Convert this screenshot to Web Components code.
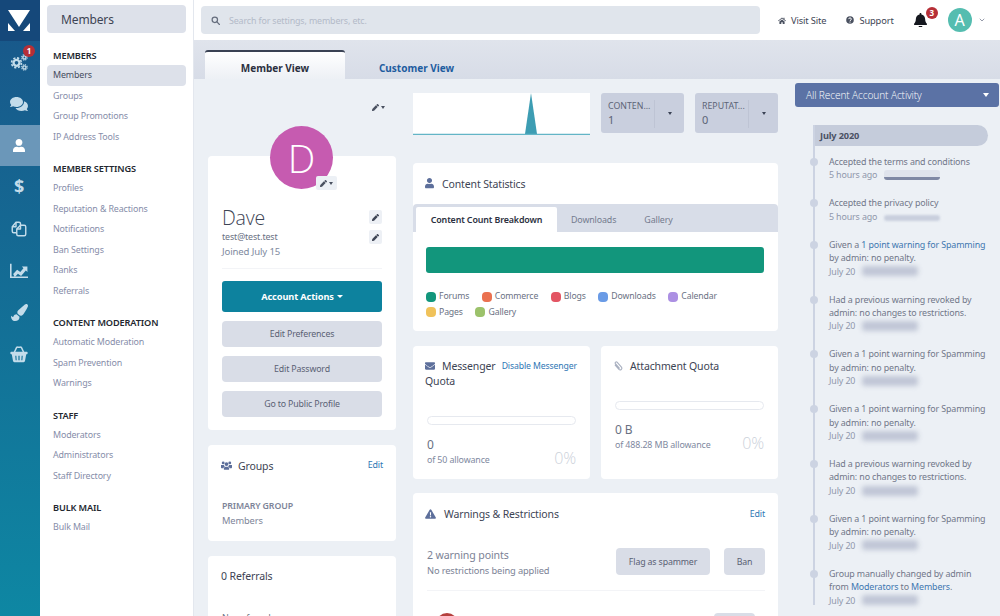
<!DOCTYPE html>
<html lang="en">
<head>
<meta charset="utf-8">
<title>Members</title>
<style>
  html, body { margin: 0; height: 616px; overflow: hidden; background: #ecf0f5; }
  body { font-family: "Noto Sans", "Open Sans", sans-serif; color: #3d4454; letter-spacing: -0.13px; }
</style>
</head>
<body>
<acp-app>
  <acp-rail slot="rail"></acp-rail>
  <acp-nav slot="nav"></acp-nav>
  <acp-header slot="header"></acp-header>
  <acp-tabs slot="tabs"></acp-tabs>
  <profile-column slot="left"></profile-column>
  <stats-column slot="middle"></stats-column>
  <activity-column slot="right"></activity-column>
</acp-app>

<script>
// icons shared by the shadow roots
const ICONS = {
  user: '<svg viewBox="0 0 448 512"><path fill="currentColor" d="M224 256c70.7 0 128-57.3 128-128S294.7 0 224 0 96 57.3 96 128s57.3 128 128 128zm89.6 32h-16.7c-22.2 10.2-46.9 16-72.9 16s-50.6-5.8-72.9-16h-16.7C60.2 288 0 348.2 0 422.4V464c0 26.5 21.5 48 48 48h352c26.5 0 48-21.5 48-48v-41.6c0-74.2-60.2-134.4-134.4-134.4z"/></svg>',
  comments: '<svg viewBox="0 0 576 512"><path fill="currentColor" d="M416 192c0-88.4-93.1-160-208-160S0 103.6 0 192c0 34.3 14.1 65.9 38 92-13.4 30.2-35.5 54.2-35.8 54.5-2.2 2.3-2.8 5.7-1.5 8.7S4.8 352 8 352c36.6 0 66.9-12.3 88.7-25 32.2 15.7 70.3 25 111.3 25 114.9 0 208-71.6 208-160zm122 220c23.9-26 38-57.7 38-92 0-66.9-53.5-124.2-129.3-148.1.9 6.6 1.3 13.3 1.3 20.1 0 105.9-107.7 192-240 192-10.8 0-21.3-.8-31.7-1.9C207.8 439.6 281.8 480 368 480c41 0 79.1-9.2 111.3-25 21.8 12.7 52.1 25 88.7 25 3.2 0 6.1-1.9 7.3-4.8 1.3-2.9.7-6.3-1.5-8.7-.3-.3-22.4-24.2-35.8-54.5z"/></svg>',
  brush: '<svg viewBox="0 0 512 512"><path fill="currentColor" d="M167.02 309.34c-40.12 2.58-76.53 17.86-97.19 72.3-2.35 6.21-8 9.98-14.59 9.98-11.11 0-45.46-27.67-55.25-34.35C0 439.62 37.93 512 128 512c75.86 0 128-43.77 128-120.19 0-3.11-.65-6.08-.97-9.13l-88.01-73.34zM457.89 0c-15.16 0-29.37 6.71-40.21 16.45C213.27 199.05 192 203.34 192 257.09c0 13.7 3.25 26.76 8.73 38.7l63.82 53.18c7.21 1.8 14.64 3.03 22.39 3.03 62.11 0 98.11-45.47 211.16-256.46 7.38-14.35 13.9-29.85 13.9-45.99C512 20.64 486 0 457.89 0z"/></svg>',
  pencil: '<svg viewBox="0 0 512 512"><path fill="currentColor" d="M497.9 142.1l-46.1 46.1c-4.7 4.7-12.3 4.7-17 0l-111-111c-4.7-4.7-4.7-12.3 0-17l46.1-46.1c18.7-18.7 49.1-18.7 67.9 0l60.1 60.1c18.8 18.7 18.8 49.1 0 67.9zM284.2 99.8L21.6 362.4.4 483.9c-2.9 16.4 11.4 30.6 27.8 27.8l121.5-21.3 262.6-262.6c4.7-4.7 4.7-12.3 0-17l-111-111c-4.8-4.7-12.4-4.7-17.1 0z"/></svg>',
  bell: '<svg viewBox="0 0 448 512"><path fill="currentColor" d="M224 512c35.32 0 63.97-28.65 63.97-64H160.03c0 35.35 28.65 64 63.97 64zm215.39-149.71c-19.32-20.76-55.47-51.99-55.47-154.29 0-77.7-54.48-139.9-127.94-155.16V32c0-17.67-14.32-32-31.98-32s-31.98 14.33-31.98 32v20.84C118.56 68.1 64.08 130.3 64.08 208c0 102.3-36.15 133.53-55.47 154.29-6 6.45-8.66 14.16-8.61 21.71.11 16.4 12.98 32 32.1 32h383.8c19.12 0 32-15.6 32.1-32 .05-7.55-2.61-15.27-8.61-21.71z"/></svg>',
  envelope: '<svg viewBox="0 0 512 512"><path fill="currentColor" d="M502.3 190.8c3.9-3.1 9.7-.2 9.7 4.7V400c0 26.5-21.5 48-48 48H48c-26.5 0-48-21.5-48-48V195.6c0-5 5.7-7.8 9.7-4.7 22.4 17.4 52.1 39.5 154.1 113.6 21.1 15.4 56.7 47.8 92.2 47.6 35.7.3 72-32.8 92.3-47.6 102-74.1 131.6-96.3 154-113.7zM256 320c23.2.4 56.6-29.2 73.4-41.4 132.7-96.3 142.8-104.7 173.4-128.7 5.8-4.5 9.2-11.5 9.2-18.9v-19c0-26.5-21.5-48-48-48H48C21.5 64 0 85.5 0 112v19c0 7.4 3.4 14.3 9.2 18.9 30.6 23.9 40.7 32.4 173.4 128.7 16.8 12.2 50.2 41.8 73.4 41.4z"/></svg>',
  cogs: '<svg viewBox="0 0 24 24" fill="none" stroke="currentColor"><circle cx="9" cy="13" r="3.6" stroke-width="2.8"/><circle cx="9" cy="13" r="5.9" stroke-width="2" stroke-dasharray="2.6 2.03"/><circle cx="18.5" cy="6.5" r="1.9" stroke-width="1.7"/><circle cx="18.5" cy="6.5" r="3.3" stroke-width="1.4" stroke-dasharray="1.5 1.1"/><circle cx="18.5" cy="18.5" r="1.9" stroke-width="1.7"/><circle cx="18.5" cy="18.5" r="3.3" stroke-width="1.4" stroke-dasharray="1.5 1.1"/></svg>',
  copy: '<svg viewBox="0 0 24 24" fill="none" stroke="currentColor" stroke-width="1.9" stroke-linejoin="round"><path d="M9 17H5a2 2 0 0 1-2-2V9l5-6h4a2 2 0 0 1 2 2v2"/><path d="M8 3v6H3"/><path d="M14 7h5a2 2 0 0 1 2 2v10a2 2 0 0 1-2 2h-8a2 2 0 0 1-2-2v-7z"/><path d="M14 7v5H9"/></svg>',
  chart: '<svg viewBox="0 0 24 20"><path fill="none" stroke="currentColor" stroke-width="2" d="M1 1v17h22"/><path fill="currentColor" d="M4 14l5-5.5 4 3 4-5-2-2h7v7l-2-2-6 7-4-3-4 4.5z"/></svg>',
  basket: '<svg viewBox="0 0 24 22"><path fill="none" stroke="currentColor" stroke-width="2" d="M5.5 9l3-6.5a2 2 0 0 1 1.8-1h3.4a2 2 0 0 1 1.8 1l3 6.5"/><rect fill="currentColor" x="0.5" y="7.5" width="23" height="3.4" rx="1.2"/><path fill="currentColor" fill-rule="evenodd" d="M2.3 10.5h19.4L20 20a1.8 1.8 0 0 1-1.8 1.5H5.8A1.8 1.8 0 0 1 4 20zM7 13l.5 6h1.4L8.5 13zm4.2 0v6h1.6v-6zm4.3 0l-.4 6h1.4l.5-6z"/></svg>',
  search: '<svg viewBox="0 0 16 16" fill="none" stroke="currentColor" stroke-width="2.2"><circle cx="6.8" cy="6.8" r="4.8"/><path d="M10.5 10.5L15 15" stroke-linecap="round"/></svg>',
  home: '<svg viewBox="0 0 16 14"><path fill="currentColor" d="M8 1L0 7.6l1 1.1L8 3l7 5.7 1-1.1-3-2.5V1.5h-2v2zM2.8 9.2V14h3.8v-3.4h2.8V14h3.8V9.2L8 4.8z"/></svg>',
  help: '<svg viewBox="0 0 16 16"><circle cx="8" cy="8" r="7.6" fill="currentColor"/><path fill="none" stroke="#fff" stroke-width="2" d="M5.3 6.2c0-3.2 5.5-3.2 5.5 0 0 2-2.8 1.8-2.8 3.9"/><rect fill="#fff" x="7" y="11.2" width="2" height="2"/></svg>',
  users: '<svg viewBox="0 0 20 16"><g fill="currentColor"><circle cx="4" cy="3.5" r="2.6"/><circle cx="16" cy="3.5" r="2.6"/><circle cx="10" cy="5.5" r="3.4"/><path d="M0 7.2h5.4c.4 1.6 1 2.2 1.8 2.8-1.6.6-2.7 1.6-3 3H1.2C.4 13 0 12.4 0 11.6zM20 7.2h-5.4c-.4 1.6-1 2.2-1.8 2.8 1.6.6 2.7 1.6 3 3h3c.8 0 1.2-.6 1.2-1.4zM5.2 14c0-2.2 1.7-3.5 3-3.5h3.6c1.3 0 3 1.3 3 3.5v1a1 1 0 0 1-1 1H6.2a1 1 0 0 1-1-1z"/></g></svg>',
  clip: '<svg viewBox="0 0 16 16" fill="none" stroke="currentColor" stroke-width="1.8" stroke-linecap="round"><path d="M3.5 6.5l6 7a2.7 2.7 0 0 0 4-3.6l-7-8a1.8 1.8 0 0 0-2.7 2.3l6.3 7.3"/></svg>',
  warn: '<svg viewBox="0 0 18 16"><path fill="currentColor" fill-rule="evenodd" d="M9 .5c.6 0 1 .3 1.3.8l7.4 12.6c.5.9-.1 2-1.2 2H1.5c-1.1 0-1.7-1.1-1.2-2L7.7 1.3C8 .8 8.4.5 9 .5zM8 5.5l.3 5h1.4l.3-5zM9 11.5a1.200 1.200 0 1 0 0 2.400 1.200 1.200 0 0 0 0-2.400z"/></svg>'
};

class AcpApp extends HTMLElement {
  constructor() {
    super();
    this.attachShadow({ mode: "open" });
    this.shadowRoot.innerHTML = `
      <style>
        :host { display: grid; grid-template-columns: 40px 154px 1fr; width: 1000px; height: 616px; overflow: hidden; background: #ecf0f5; }
        .main { display: flex; flex-direction: column; min-width: 0; height: 616px; overflow: hidden; }
        .cols { display: grid; grid-template-columns: 188px 365px 205px; column-gap: 17px; padding-left: 14px; flex: 1; min-height: 0; overflow: hidden; }
      </style>
      <slot name="rail"></slot>
      <slot name="nav"></slot>
      <div class="main">
        <slot name="header"></slot>
        <slot name="tabs"></slot>
        <div class="cols">
          <slot name="left"></slot>
          <slot name="middle"></slot>
          <slot name="right"></slot>
        </div>
      </div>`;
  }
}

class AcpRail extends HTMLElement {
  constructor() {
    super();
    this.attachShadow({ mode: "open" });
    const items = [
      [ICONS.cogs, 20, false, '<b class="badge">1</b>'],
      [ICONS.comments, 18, false, ""],
      [ICONS.user, 12, true, ""],
      ['<span class="dollar">$</span>', 0, false, ""],
      [ICONS.copy, 18, false, ""],
      [ICONS.chart, 19, false, ""],
      [ICONS.brush, 17, false, ""],
      [ICONS.basket, 18, false, ""]
    ];
    this.shadowRoot.innerHTML = `
      <style>
        :host { display: block; height: 616px; background: linear-gradient(#195689, #0e87a3); color: #c3dcea; }
        .logo { height: 41px; background: #15487a; display: flex; align-items: center; justify-content: center; padding-right: 2px; }
        .logo svg { width: 22px; height: 21px; }
        .item { position: relative; height: 41.8px; display: flex; align-items: center; justify-content: center; padding-right: 2px; }
        .item svg { display: block; }
        .item.on { background: #6b97b9; color: #fff; }
        .dollar { font: 700 18px "Noto Sans", sans-serif; line-height: 1; }
        .badge { position: absolute; left: 23px; top: 4px; width: 12px; height: 12px; border-radius: 50%; background: #b62f37; color: #fff; font: 700 8px/12px "Noto Sans", sans-serif; text-align: center; }
      </style>
      <div class="logo"><svg viewBox="0 0 22 21"><path fill="#fff" d="M0 0h22L11 17zM0 13l7 8H0zM22 13l-7 8h7z"/></svg></div>
      ${items.map(([icon, w, on, extra]) => `<div class="item${on ? " on" : ""}"><span style="display:block;width:${w || 10}px">${icon}</span>${extra}</div>`).join("")}`;
  }
}

class AcpNav extends HTMLElement {
  constructor() {
    super();
    this.attachShadow({ mode: "open" });
    const sections = [
      ["MEMBERS", ["Members", "Groups", "Group Promotions", "IP Address Tools"]],
      ["MEMBER SETTINGS", ["Profiles", "Reputation & Reactions", "Notifications", "Ban Settings", "Ranks", "Referrals"]],
      ["CONTENT MODERATION", ["Automatic Moderation", "Spam Prevention", "Warnings"]],
      ["STAFF", ["Moderators", "Administrators", "Staff Directory"]],
      ["BULK MAIL", ["Bulk Mail"]]
    ];
    this.shadowRoot.innerHTML = `
      <style>
        :host { display: block; height: 616px; box-sizing: border-box; background: #fff; border-right: 1px solid #e3e7ee; padding: 5px 7px 0; font-family: "Noto Sans", sans-serif; }
        .title { height: 28px; background: #dde1ea; border-radius: 4px; padding-left: 14px; font-size: 12px; line-height: 30px; color: #3d4454; }
        .sections { display: flex; flex-direction: column; gap: 14.6px; margin-top: 16px; }
        h4 { margin: 0 0 2px 6px; font-size: 9.2px; font-weight: 600; line-height: 14px; color: #23272f; }
        a { display: block; height: 20.6px; line-height: 20.6px; padding-left: 6px; font-size: 8.9px; color: #868da9; border-radius: 4px; }
        a.on { background: #dde1ea; color: #454c5e; }
      </style>
      <div class="title">Members</div>
      <div class="sections">
        ${sections.map(([head, links], s) => `<section><h4>${head}</h4>${links.map((l, i) =>
          `<a class="${s === 0 && i === 0 ? "on" : ""}">${l.replace("&", "&amp;")}</a>`).join("")}</section>`).join("")}
      </div>`;
  }
}

class AcpHeader extends HTMLElement {
  constructor() {
    super();
    this.attachShadow({ mode: "open" });
    this.shadowRoot.innerHTML = `
      <style>
        :host { display: flex; align-items: center; height: 40px; flex: none; background: #fff; padding-left: 7px; box-sizing: border-box; font-family: "Noto Sans", sans-serif; }
        svg { display: block; }
        .search { width: 559px; height: 28px; box-sizing: border-box; background: #e0e5ec; border-radius: 4px; display: flex; align-items: center; padding-left: 10px; gap: 9px; color: #b3bac8; font-size: 8.9px; flex: none; }
        .search span { display: block; width: 9px; color: #666e7e; }
        .links { display: flex; align-items: center; margin-left: 18px; font-size: 9.3px; color: #3d4454; }
        .links i { display: block; width: 8px; margin-right: 5px; color: #4a5160; }
        .link { display: flex; align-items: center; }
        .link + .link { margin-left: 20px; }
        .bell { position: relative; width: 13px; margin-left: 20px; color: #15181f; }
        .bell b { position: absolute; left: 12px; top: -6px; width: 12px; height: 12px; border-radius: 50%; background: #b62f37; color: #fff; font: 700 8px/12px "Noto Sans", sans-serif; text-align: center; }
        .avatar { width: 24px; height: 24px; margin-left: 21px; border-radius: 50%; background: #55bdb0; color: #fff; font-size: 16px; line-height: 24px; text-align: center; }
        .chev { margin-left: 7px; width: 6px; color: #8a90a0; }
      </style>
      <div class="search"><span>${ICONS.search}</span>Search for settings, members, etc.</div>
      <div class="links">
        <div class="link"><i>${ICONS.home}</i>Visit Site</div>
        <div class="link"><i>${ICONS.help}</i>Support</div>
      </div>
      <div class="bell">${ICONS.bell}<b>3</b></div>
      <div class="avatar">A</div>
      <svg class="chev" viewBox="0 0 8 5"><path fill="none" stroke="currentColor" stroke-width="1.2" d="M1 1l3 3 3-3"/></svg>`;
  }
}

class AcpTabs extends HTMLElement {
  constructor() {
    super();
    this.attachShadow({ mode: "open" });
    this.shadowRoot.innerHTML = `
      <style>
        :host { display: flex; align-items: flex-end; flex: none; height: 39px; box-sizing: border-box; background: linear-gradient(#e0e4ec, #d7dce7); padding-left: 11px; font-family: "Noto Sans", sans-serif; font-size: 10px; font-weight: 700; letter-spacing: 0; }
        div { height: 29px; text-align: center; box-sizing: border-box; }
        .on { width: 140px; border-top: 2px solid #3a4254; background: linear-gradient(#fff, #edf0f5); color: #2b3040; border-radius: 3px 3px 0 0; line-height: 32px; }
        .off { width: 143px; color: #1e5c9f; line-height: 36px; }
      </style>
      <div class="on">Member View</div>
      <div class="off">Customer View</div>`;
  }
}

// white box used all over the columns
class AcpCard extends HTMLElement {
  constructor() {
    super();
    this.attachShadow({ mode: "open" });
    this.shadowRoot.innerHTML = `
      <style>
        :host { display: block; background: #fff; border-radius: 4px; box-sizing: border-box; }
      </style>
      <slot></slot>`;
  }
}

class AcpButton extends HTMLElement {
  constructor() {
    super();
    this.attachShadow({ mode: "open" });
    this.shadowRoot.innerHTML = `
      <style>
        :host { display: flex; align-items: center; justify-content: center; background: #d9dde7; border-radius: 4px; color: #5a6174; font-size: 8.8px; letter-spacing: -0.15px; box-sizing: border-box; height: 26.5px; }
        :host([primary]) { background: #0d829e; color: #fff; font-weight: 700; font-size: 9.2px; letter-spacing: -0.1px; height: 31px; border-radius: 3px; }
      </style>
      <slot></slot>`;
  }
}

class ProfileColumn extends HTMLElement {
  constructor() {
    super();
    this.attachShadow({ mode: "open" });
    this.shadowRoot.innerHTML = `
      <style>
        :host { display: flex; flex-direction: column; gap: 15px; font-family: "Noto Sans", sans-serif; font-size: 8.9px; color: #6a7183; }
        svg { display: block; }
        .top { height: 62px; display: flex; justify-content: flex-end; align-items: center; padding: 0 11px 6px 0; box-sizing: border-box; color: #4a5160; }
        .tool { display: flex; align-items: center; gap: 2px; }
        .tool span { display: block; width: 7px; }
        .caret { width: 0; height: 0; border: 2.5px solid transparent; border-top: 3px solid currentColor; border-bottom: 0; }
        .profile { height: 274px; padding: 0 14px; position: relative; }
        .avatar { position: absolute; left: 62px; top: -30px; width: 63px; height: 63px; border-radius: 50%; background: #c65bb0; color: #fff; font-family: "Open Sans", sans-serif; font-weight: 300; font-size: 39px; line-height: 63px; text-align: center; }
        .avatar .tool { position: absolute; left: 46px; top: 50px; width: 21px; height: 14px; background: #ecf0f5; border-radius: 2px; justify-content: center; color: #4a5160; }
        .head { position: relative; padding-top: 50px; height: 113px; box-sizing: border-box; border-bottom: 1px solid #f3f4f7; }
        .name { font-family: "Open Sans", sans-serif; font-size: 19.5px; font-weight: 300; line-height: 24px; margin-bottom: -1px; color: #3d4454; letter-spacing: -0.2px; }
        .mail { line-height: 15px; color: #6a7183; }
        .joined { line-height: 15px; color: #808aa0; font-size: 9.6px; }
        .pen { position: absolute; right: 0; width: 13px; height: 14px; background: #edf0f5; border-radius: 2px; display: flex; align-items: center; justify-content: center; color: #3d4454; }
        .pen span { display: block; width: 7px; }
        .actions { display: flex; flex-direction: column; gap: 8.5px; margin-top: 12px; }
        .caret.w { display: inline-block; margin-left: 3px; border-width: 3px; border-bottom: 0; }
        .groups { height: 96px; padding: 0 13px; }
        .row { display: flex; align-items: center; height: 41px; font-size: 10.5px; color: #3d4454; }
        .row i { display: block; width: 11px; margin-right: 6px; color: #5d6f9b; }
        .edit { margin-left: auto; margin-top: -2px; font-size: 8.9px; color: #2f77b5; }
        .primary { margin: 13px 0 0 1px; font-weight: 600; font-size: 8.8px; color: #7d8498; line-height: 15px; }
        .val { margin-left: 1px; color: #7d8498; line-height: 14px; font-size: 9.3px; }
        .ref { height: 120px; padding: 0 13px; }
        .ref .row { height: 40px; }
        .none { margin: 15px 0 0 1px; color: #6a7183; }
      </style>
      <div class="top"><div class="tool"><span>${ICONS.pencil}</span><b class="caret"></b></div></div>
      <acp-card class="profile">
        <div class="avatar">D<div class="tool"><span>${ICONS.pencil}</span><b class="caret"></b></div></div>
        <div class="head">
          <div class="name">Dave</div>
          <div class="mail">test@test.test</div>
          <div class="joined">Joined July 15</div>
          <div class="pen" style="top:54px"><span>${ICONS.pencil}</span></div>
          <div class="pen" style="top:74px"><span>${ICONS.pencil}</span></div>
        </div>
        <div class="actions">
          <acp-button primary>Account Actions<b class="caret w"></b></acp-button>
          <acp-button>Edit Preferences</acp-button>
          <acp-button>Edit Password</acp-button>
          <acp-button>Go to Public Profile</acp-button>
        </div>
      </acp-card>
      <acp-card class="groups">
        <div class="row"><i>${ICONS.users}</i>Groups<a class="edit">Edit</a></div>
        <div class="primary">PRIMARY GROUP</div>
        <div class="val">Members</div>
      </acp-card>
      <acp-card class="ref">
        <div class="row">0 Referrals</div>
        <div class="none">None found</div>
      </acp-card>`;
  }
}

class StatBox extends HTMLElement {
  static get observedAttributes() { return ["label", "value"]; }
  constructor() {
    super();
    this.attachShadow({ mode: "open" });
    this.shadowRoot.innerHTML = `
      <style>
        :host { display: flex; height: 40px; background: #c9cfde; border-radius: 3px; box-sizing: border-box; color: #5c6476; }
        .txt { width: 54px; padding-left: 7px; box-sizing: border-box; border-right: 1px solid #bec4d4; margin: 7px 0 5px; }
        .l { font-size: 8.8px; line-height: 13px; white-space: nowrap; letter-spacing: 0; }
        .v { font-size: 11px; line-height: 14px; }
        .c { flex: 1; display: flex; align-items: center; justify-content: center; }
        .c b { width: 0; height: 0; border: 2.8px solid transparent; border-top: 3.2px solid #3a4254; border-bottom: 0; }
      </style>
      <div class="txt"><div class="l"></div><div class="v"></div></div>
      <div class="c"><b></b></div>`;
  }
  attributeChangedCallback(name, old, val) {
    this.shadowRoot.querySelector(name === "label" ? ".l" : ".v").textContent = val;
  }
}

class QuotaBox extends HTMLElement {
  constructor() {
    super();
    this.attachShadow({ mode: "open" });
    this.shadowRoot.innerHTML = `
      <style>
        :host { display: block; background: #fff; border-radius: 4px; height: 133px; padding: 0 14px 0 12px; box-sizing: border-box; font-family: "Noto Sans", sans-serif; }
        .head { padding-top: 13px; line-height: 15px; font-size: 10.5px; color: #3d4454; height: 70px; box-sizing: border-box; }
        :host([single]) .head { height: 55px; }
        .bar { height: 7px; margin-left: 2px; border: 1px solid #e6e9ef; border-radius: 5px; background: #fff; }
        .foot { display: flex; justify-content: space-between; align-items: flex-end; margin: 12px 0 0 2px; }
        .n { font-size: 12px; line-height: 16px; color: #6a7183; }
        .of { font-size: 8.9px; line-height: 13px; color: #8089a0; }
        .pct { font-family: "Open Sans", sans-serif; font-size: 16px; line-height: 22px; font-weight: 300; color: #ccd1da; margin-bottom: -3px; }
      </style>
      <div class="head"><slot name="head"></slot></div>
      <div class="bar"></div>
      <div class="foot">
        <div><div class="n"><slot name="n"></slot></div><div class="of"><slot name="of"></slot></div></div>
        <div class="pct">0%</div>
      </div>`;
  }
}

class StatsColumn extends HTMLElement {
  constructor() {
    super();
    this.attachShadow({ mode: "open" });
    const legend = [["#12967c", "Forums"], ["#ea7150", "Commerce"], ["#e35563", "Blogs"], ["#6a9be6", "Downloads"], ["#ac90e3", "Calendar"], ["#f0c25a", "Pages"], ["#9cc26b", "Gallery"]];
    this.shadowRoot.innerHTML = `
      <style>
        :host { display: flex; flex-direction: column; font-family: "Noto Sans", sans-serif; font-size: 8.9px; color: #6a7183; }
        .top { display: grid; grid-template-columns: 177px 83px 83px; column-gap: 11px; margin-top: 14px; height: 42px; }
        .chart { display: block; width: 177px; height: 42px; background: #fff; }
        .stats { margin-top: 28px; height: 168px; display: block; }
        .title { display: flex; align-items: center; height: 41px; padding-left: 12px; font-size: 10.5px; color: #3d4454; }
        .title i { display: block; margin-right: 8px; flex: none; color: #5d6f9b; }
        .title i svg { display: block; }
        .tabs { display: flex; align-items: flex-end; height: 28px; background: #d8dde8; border-radius: 4px 4px 0 0; padding-left: 3px; }
        .tabs div { height: 25px; line-height: 26px; padding: 0 14px; color: #747b8e; }
        .tabs .on { width: 141px; box-sizing: border-box; padding: 0; text-align: center; background: #fff; color: #2b3040; font-weight: 600; border-radius: 2px 2px 0 0; }
        .meter { height: 26px; margin: 15px 14px 0 13px; background: #12967c; border-radius: 3px; }
        .legend { display: flex; flex-wrap: wrap; gap: 0 12.6px; margin: 16px 14px 0 13px; line-height: 15.5px; font-size: 8.7px; }
        .legend span { display: flex; align-items: center; gap: 3px; }
        .legend b { width: 10px; height: 10px; border-radius: 4px; }
        .pair { display: grid; grid-template-columns: 177px 177px; column-gap: 11px; margin-top: 15px; }
        .mail { float: right; margin-right: -1px; font-size: 8.7px; color: #2f77b5; line-height: 14px; }
        .lbl i { display: inline-block; width: 10px; margin-right: 7px; vertical-align: -1px; color: #5d6f9b; }
        .lbl i svg { display: block; }
        .lbl i.clip { color: #a9b0c0; }
        .warn { margin-top: 14px; height: 200px; padding: 0 13px 0 0; }
        .warn .edit { margin-left: auto; margin-top: -2px; font-size: 8.9px; color: #2f77b5; }
        .warn .title { height: 42px; }
        .points { display: flex; justify-content: space-between; align-items: flex-start; margin: 13px 0 0 14px; padding-bottom: 12px; border-bottom: 1px solid #f3f4f7; }
        .points p { margin: 0; }
        .p1 { font-size: 10.6px; line-height: 15px; color: #7b8295; margin-top: 0; }
        .p2 { font-size: 9.3px; line-height: 15px; color: #7b8295; }
        .btns { display: flex; gap: 14px; }
        .btns acp-button { height: 27px; }
        .row { display: flex; align-items: flex-start; margin: 22px 0 0 23px; font-size: 10.5px; }
        .row .av { width: 22px; height: 22px; border-radius: 50%; background: #b5403e; margin-right: 10px; }
        .row .s { color: #3d4454; font-weight: 600; margin-right: 8px; line-height: 16px; }
        .row .g { color: #12806a; font-weight: 600; line-height: 16px; }
        .row acp-button { margin-left: auto; width: 41px; margin-right: 10px; }
      </style>
      <div class="top">
        <svg class="chart" viewBox="0 0 177 42"><path fill="#3d9db3" d="M112 41L118 0l6 41z"/><path stroke="#63b5c6" stroke-width="1.2" d="M0 41.3h177"/></svg>
        <stat-box label="CONTEN..." value="1"></stat-box>
        <stat-box label="REPUTAT..." value="0"></stat-box>
      </div>
      <acp-card class="stats">
        <div class="title"><i style="width:9px">${ICONS.user}</i>Content Statistics</div>
        <div class="tabs"><div class="on">Content Count Breakdown</div><div>Downloads</div><div>Gallery</div></div>
        <div class="meter"></div>
        <div class="legend">${legend.map(([c, t]) => `<span><b style="background:${c}"></b>${t}</span>`).join("")}</div>
      </acp-card>
      <div class="pair">
        <quota-box>
          <div slot="head" class="lbl"><a class="mail">Disable Messenger</a><i>${ICONS.envelope}</i>Messenger<br>Quota</div>
          <span slot="n">0</span>
          <span slot="of">of 50 allowance</span>
        </quota-box>
        <quota-box single>
          <div slot="head" class="lbl"><i class="clip">${ICONS.clip}</i>Attachment Quota</div>
          <span slot="n">0 B</span>
          <span slot="of">of 488.28 MB allowance</span>
        </quota-box>
      </div>
      <acp-card class="warn">
        <div class="title"><i style="width:11px">${ICONS.warn}</i>Warnings &amp; Restrictions<a class="edit">Edit</a></div>
        <div class="points">
          <div><p class="p1">2 warning points</p><p class="p2">No restrictions being applied</p></div>
          <div class="btns"><acp-button style="width:94px">Flag as spammer</acp-button><acp-button style="width:41px">Ban</acp-button></div>
        </div>
        <div class="row"><div class="av"></div><span class="s">Spamming</span><span class="g">2 Moderated</span><acp-button></acp-button></div>
      </acp-card>`;
  }
}

class ActivityColumn extends HTMLElement {
  constructor() {
    super();
    this.attachShadow({ mode: "open" });
    const given = 'Given a 1 point warning for Spamming<br>by admin: no penalty.';
    const revoked = 'Had a previous warning revoked by<br>admin: no changes to restrictions.';
    const items = [
      ["Accepted the terms and conditions", "5 hours ago", "u"],
      ["Accepted the privacy policy", "5 hours ago", "ip"],
      ['Given a <a>1 point warning for Spamming</a><br>by admin: no penalty.', "July 20"],
      [revoked, "July 20"],
      [given, "July 20"],
      [given, "July 20"],
      [revoked, "July 20"],
      [given, "July 20"],
      ['Group manually changed by admin<br>from <a>Moderators</a> to <a>Members</a>.', "July 20"]
    ];
    this.shadowRoot.innerHTML = `
      <style>
        :host { display: block; font-family: "Noto Sans", sans-serif; font-size: 8.9px; color: #717789; position: relative; }
        .select { display: flex; align-items: center; justify-content: space-between; height: 24px; width: 204px; margin-top: 4px; padding: 0 10px 0 11px; box-sizing: border-box; background: #5b72a5; border-radius: 3px; color: #fff; font-family: "Open Sans", sans-serif; font-size: 10.2px; font-weight: 300; }
        .select b { width: 0; height: 0; border: 3.5px solid transparent; border-top: 4px solid #fff; border-bottom: 0; }
        .tl { margin: 18px 0 0 18px; border-left: 2px solid #ccd3e2; height: 480px; }
        .month { width: 173px; height: 21px; line-height: 21px; box-sizing: border-box; padding-left: 5px; background: #c5ccdb; border-radius: 0 11px 11px 0; font-weight: 700; color: #4a5164; font-size: 9.2px; }
        ul { list-style: none; margin: 9px 0 0; padding: 0; display: flex; flex-direction: column; gap: 14.6px; }
        li { position: relative; padding-left: 14px; line-height: 13.4px; white-space: nowrap; }
        li::before { content: ""; position: absolute; left: -5px; top: 3px; width: 8px; height: 8px; border-radius: 50%; background: #ccd3e2; }
        a { color: #3e77b0; }
        .date { display: flex; align-items: center; color: #8f97ab; }
        .blur { display: block; width: 56px; height: 10px; margin-left: 7px; background: #c0c6d6; filter: blur(2.4px); border-radius: 3px; }
        .blur.u { background: linear-gradient(#dfe3ec 70%, #7f88a4 70%); filter: blur(.7px); }
        .blur.ip { background: #c9cfdd; height: 6px; margin-top: 3px; filter: blur(1.2px); }
      </style>
      <div class="select">All Recent Account Activity<b></b></div>
      <div class="tl">
        <div class="month">July 2020</div>
        <ul>${items.map(([t, d, k]) => `<li>${t}<div class="date">${d}<span class="blur ${k || ""}"></span></div></li>`).join("")}</ul>
      </div>`;
  }
}

customElements.define("acp-app", AcpApp);
customElements.define("acp-rail", AcpRail);
customElements.define("acp-nav", AcpNav);
customElements.define("acp-header", AcpHeader);
customElements.define("acp-tabs", AcpTabs);
customElements.define("acp-card", AcpCard);
customElements.define("acp-button", AcpButton);
customElements.define("profile-column", ProfileColumn);
customElements.define("stat-box", StatBox);
customElements.define("quota-box", QuotaBox);
customElements.define("stats-column", StatsColumn);
customElements.define("activity-column", ActivityColumn);
</script>
</body>
</html>
